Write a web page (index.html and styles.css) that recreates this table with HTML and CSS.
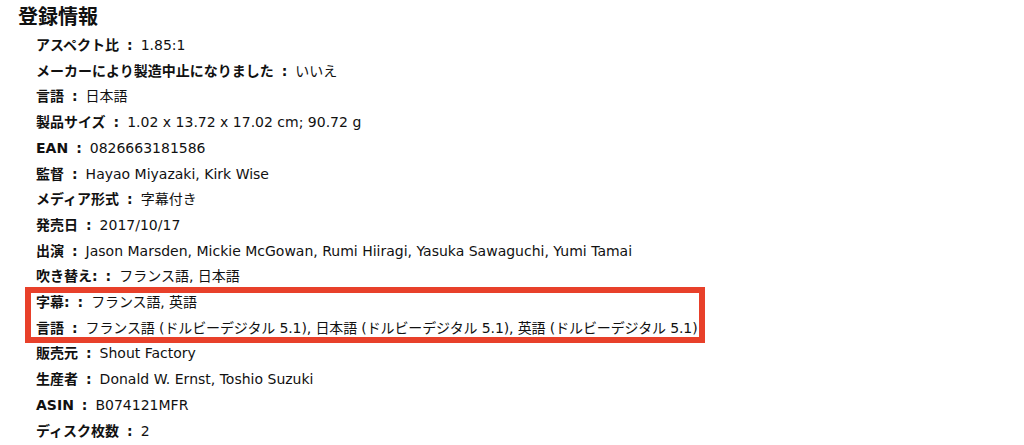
FILE: index.html
```html
<!DOCTYPE html>
<html lang="ja">
<head>
<meta charset="utf-8">
<link rel="stylesheet" href="styles.css">
</head>
<body>
<div class="page">
  <h2 class="title">登録情報</h2>
  <div class="details">
    <div class="row"><span class="label">アスペクト比</span><span class="sep">:</span><span class="value">1.85:1</span></div>
    <div class="row"><span class="label">メーカーにより製造中止になりました</span><span class="sep">:</span><span class="value">いいえ</span></div>
    <div class="row"><span class="label">言語</span><span class="sep">:</span><span class="value">日本語</span></div>
    <div class="row"><span class="label">製品サイズ</span><span class="sep">:</span><span class="value">1.02 x 13.72 x 17.02 cm; 90.72 g</span></div>
    <div class="row"><span class="label">EAN</span><span class="sep">:</span><span class="value">0826663181586</span></div>
    <div class="row"><span class="label">監督</span><span class="sep">:</span><span class="value">Hayao Miyazaki, Kirk Wise</span></div>
    <div class="row"><span class="label">メディア形式</span><span class="sep">:</span><span class="value">字幕付き</span></div>
    <div class="row"><span class="label">発売日</span><span class="sep">:</span><span class="value">2017/10/17</span></div>
    <div class="row"><span class="label">出演</span><span class="sep">:</span><span class="value">Jason Marsden, Mickie McGowan, Rumi Hiiragi, Yasuka Sawaguchi, Yumi Tamai</span></div>
    <div class="row"><span class="label">吹き替え:</span><span class="sep">:</span><span class="value">フランス語, 日本語</span></div>
    <div class="highlight">
      <div class="row"><span class="label">字幕:</span><span class="sep">:</span><span class="value">フランス語, 英語</span></div>
      <div class="row"><span class="label">言語</span><span class="sep">:</span><span class="value">フランス語 (ドルビーデジタル 5.1), 日本語 (ドルビーデジタル 5.1), 英語 (ドルビーデジタル 5.1)</span></div>
    </div>
    <div class="row"><span class="label">販売元</span><span class="sep">:</span><span class="value">Shout Factory</span></div>
    <div class="row"><span class="label">生産者</span><span class="sep">:</span><span class="value">Donald W. Ernst, Toshio Suzuki</span></div>
    <div class="row"><span class="label">ASIN</span><span class="sep">:</span><span class="value">B074121MFR</span></div>
    <div class="row"><span class="label">ディスク枚数</span><span class="sep">:</span><span class="value">2</span></div>
  </div>
</div>
</body>
</html>
```
FILE: styles.css
```css
html, body {
  margin: 0;
  padding: 0;
  background: #ffffff;
}
body {
  font-family: "DejaVu Sans", "Noto Sans CJK JP", sans-serif;
  color: #111111;
  font-size: 14px;
}
.page {
  padding: 3px 0 0 18px;
}
.title {
  margin: 0;
  font-size: 20px;
  line-height: 28px;
  font-weight: 700;
  color: #111111;
}
.details {
  padding-left: 18px;
  margin-top: 2px;
}
.row {
  line-height: 25.7px;
  white-space: nowrap;
}
.label {
  font-weight: 700;
}
.sep {
  font-weight: 700;
  margin: 0 8px 0 8px;
}
.highlight {
  position: relative;
  width: fit-content;
}
.highlight .value {
  letter-spacing: -0.12px;
}
.highlight::after {
  content: "";
  position: absolute;
  top: -3px;
  bottom: -2px;
  left: -11px;
  right: -8px;
  border: 6px solid #e8402a;
  pointer-events: none;
}
```
